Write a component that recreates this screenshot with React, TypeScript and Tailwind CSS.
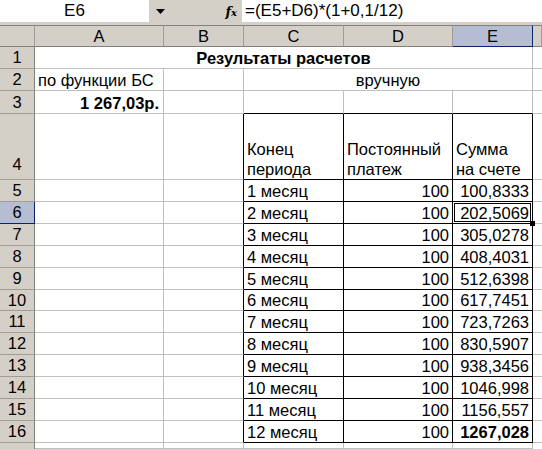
import type { ReactNode } from 'react'

const ROWS: [string, string][] = [
  ['1 месяц', '100,8333'],
  ['2 месяц', '202,5069'],
  ['3 месяц', '305,0278'],
  ['4 месяц', '408,4031'],
  ['5 месяц', '512,6398'],
  ['6 месяц', '617,7451'],
  ['7 месяц', '723,7263'],
  ['8 месяц', '830,5907'],
  ['9 месяц', '938,3456'],
  ['10 месяц', '1046,998'],
  ['11 месяц', '1156,557'],
  ['12 месяц', '1267,028'],
]

const GRID = 'border-r border-b border-[#c0c0c0]'
const COL_HEAD =
  'flex items-center justify-center bg-[#d4d0c8] border-t border-t-[#808080] border-r border-r-[#a09d96] border-b border-b-[#808080]'
const ROW_HEAD =
  'flex items-center justify-center bg-[#d4d0c8] border-r border-r-[#808080] border-b border-b-[#a09d96]'

function Cell({ className, children }: { className: string; children?: ReactNode }) {
  return <div className={`flex items-end whitespace-nowrap leading-[18px] pb-[1px] ${className}`}>{children}</div>
}

export default function App() {
  return (
    <div className="h-[449px] w-[542px] overflow-hidden bg-white font-['Liberation_Sans',Arial,sans-serif] text-[16.5px] text-black">
      {/* formula bar */}
      <div className="flex h-[22px] bg-[#d4d0c8]">
        <div className="flex w-[149px] items-center justify-center bg-white text-[17px]">E6</div>
        <div className="flex w-[93px] items-center">
          <svg width="9" height="5" viewBox="0 0 9 5" className="ml-[7px]">
            <path d="M0 0h9L4.5 5z" fill="#000" />
          </svg>
          <span className="ml-auto mr-[5px] font-['DejaVu_Serif',serif] text-[13px] font-bold italic leading-none">
            f<span className="text-[10px]">x</span>
          </span>
        </div>
        <div className="flex flex-1 items-center bg-white pl-[3px] text-[17px]">=(E5+D6)*(1+0,1/12)</div>
      </div>
      <div className="h-[3px] bg-[#d4d0c8]" />

      <div className="grid h-[424px] grid-cols-[35px_129px_80px_100px_109px_80px_1fr] grid-rows-[22px_22px_22px_23px_66px_22px_22px_22px_22px_22px_21px_22px_22px_22px_22px_22px_22px_1fr]">
        {/* column headers */}
        <div className={COL_HEAD} />
        <div className={COL_HEAD}>A</div>
        <div className={COL_HEAD}>B</div>
        <div className={COL_HEAD}>C</div>
        <div className={COL_HEAD}>D</div>
        <div className="flex items-center justify-center border-t border-t-[#808080] border-r border-r-[#0a246a] border-b border-b-[#0a246a] bg-[#b6bdd2]">
          E
        </div>
        <div className={COL_HEAD} />

        {/* row 1 */}
        <div className={ROW_HEAD}>1</div>
        <Cell className={`col-span-5 justify-center font-bold ${GRID}`}>Результаты расчетов</Cell>
        <div className="border-b border-[#c0c0c0]" />

        {/* row 2 */}
        <div className={ROW_HEAD}>2</div>
        <Cell className={`pl-[3px] ${GRID}`}>по функции БС</Cell>
        <div className={GRID} />
        <Cell className={`col-span-3 justify-center ${GRID}`}>вручную</Cell>
        <div className="border-b border-[#c0c0c0]" />

        {/* row 3 */}
        <div className={ROW_HEAD}>3</div>
        <Cell className={`justify-end pr-[4px] font-bold ${GRID}`}>1 267,03р.</Cell>
        <div className={GRID} />
        <div className="border-r border-b border-r-[#c0c0c0] border-b-black" />
        <div className="border-r border-b border-r-[#c0c0c0] border-b-black" />
        <div className="border-r border-b border-r-[#c0c0c0] border-b-black" />
        <div className="border-b border-[#c0c0c0]" />

        {/* row 4 */}
        <div className={`${ROW_HEAD} items-end pb-[2px]`}>4</div>
        <div className={GRID} />
        <div className="border-r border-b border-r-black border-b-[#c0c0c0]" />
        <div className="flex flex-col justify-end border-r border-b border-black pl-[3px] leading-[20px]">
          <span>Конец</span>
          <span>периода</span>
        </div>
        <div className="flex flex-col justify-end border-r border-b border-black pl-[3px] leading-[20px]">
          <span>Постоянный</span>
          <span>платеж</span>
        </div>
        <div className="flex flex-col justify-end border-r border-b border-black pl-[3px] leading-[20px]">
          <span>Сумма</span>
          <span>на счете</span>
        </div>
        <div className="border-b border-[#c0c0c0]" />

        {/* rows 5-16 */}
        {ROWS.map(([period, sum], i) => {
          const row = i + 5
          const active = row === 6
          const last = row === 16
          return [
            <div
              key={`h${row}`}
              className={
                active
                  ? 'flex items-center justify-center border-r border-b border-r-[#0a246a] border-b-[#0a246a] bg-[#b6bdd2]'
                  : ROW_HEAD
              }
            >
              {row}
            </div>,
            <div key={`a${row}`} className={GRID} />,
            <div key={`b${row}`} className="border-r border-b border-r-black border-b-[#c0c0c0]" />,
            <Cell key={`c${row}`} className="border-r border-b border-black pl-[3px]">
              {period}
            </Cell>,
            <Cell key={`d${row}`} className="justify-end border-r border-b border-black pr-[3px]">
              100
            </Cell>,
            <Cell
              key={`e${row}`}
              className={`relative justify-end border-r border-b border-black pr-[3px] ${last ? 'font-bold' : ''}`}
            >
              {sum}
              {active && (
                <>
                  <div className="pointer-events-none absolute inset-0 border border-white">
                    <div className="h-full w-full border border-black" />
                  </div>
                  <div className="absolute -right-[3px] -bottom-[3px] z-10 h-[5px] w-[5px] bg-black" />
                </>
              )}
            </Cell>,
            <div key={`f${row}`} className="border-b border-[#c0c0c0]" />,
          ]
        })}

        {/* row 17 (partial) */}
        <div className="bg-[#d4d0c8] border-r border-r-[#808080]" />
        <div className={GRID} />
        <div className={GRID} />
        <div className={GRID} />
        <div className={GRID} />
        <div className={GRID} />
        <div />
      </div>
    </div>
  )
}
